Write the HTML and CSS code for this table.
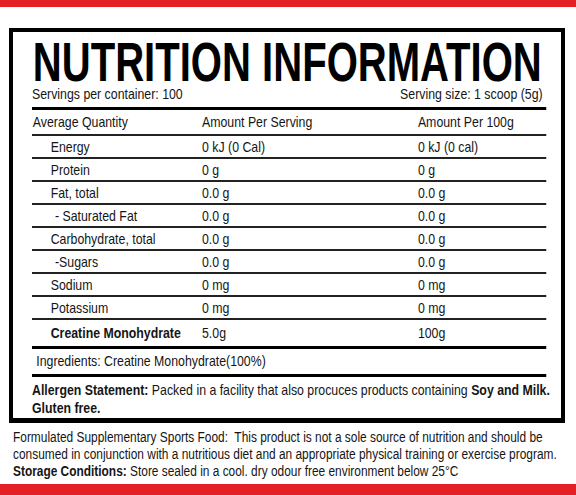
FILE: index.html
```html
<!DOCTYPE html>
<html lang="en">
<head>
<meta charset="utf-8">
<title>Nutrition Information</title>
<link rel="stylesheet" href="styles.css">
</head>
<body>
<div class="page">
  <div class="red-bar top"></div>
  <section class="panel">
    <div class="condensed panel-inner">
      <h1 class="title"><span class="title-text">NUTRITION INFORMATION</span></h1>
      <div class="servings">
        <span>Servings per container: 100</span>
        <span>Serving size: 1 scoop (5g)</span>
      </div>
      <div class="facts">
        <div class="row head">
          <div class="c1">Average Quantity</div>
          <div class="c2">Amount Per Serving</div>
          <div class="c3">Amount Per 100g</div>
        </div>
        <div class="row">
          <div class="c1 ind">Energy</div>
          <div class="c2">0 kJ (0 Cal)</div>
          <div class="c3">0 kJ (0 cal)</div>
        </div>
        <div class="row">
          <div class="c1 ind">Protein</div>
          <div class="c2">0 g</div>
          <div class="c3">0 g</div>
        </div>
        <div class="row">
          <div class="c1 ind">Fat, total</div>
          <div class="c2">0.0 g</div>
          <div class="c3">0.0 g</div>
        </div>
        <div class="row">
          <div class="c1 sub">- Saturated Fat</div>
          <div class="c2">0.0 g</div>
          <div class="c3">0.0 g</div>
        </div>
        <div class="row">
          <div class="c1 ind">Carbohydrate, total</div>
          <div class="c2">0.0 g</div>
          <div class="c3">0.0 g</div>
        </div>
        <div class="row">
          <div class="c1 sub">-Sugars</div>
          <div class="c2">0.0 g</div>
          <div class="c3">0.0 g</div>
        </div>
        <div class="row">
          <div class="c1 ind">Sodium</div>
          <div class="c2">0 mg</div>
          <div class="c3">0 mg</div>
        </div>
        <div class="row">
          <div class="c1 ind">Potassium</div>
          <div class="c2">0 mg</div>
          <div class="c3">0 mg</div>
        </div>
        <div class="row last">
          <div class="c1 ind strong">Creatine Monohydrate</div>
          <div class="c2">5.0g</div>
          <div class="c3">100g</div>
        </div>
      </div>
      <div class="ingredients">Ingredients: Creatine Monohydrate(100%)</div>
      <p class="allergen"><b>Allergen Statement:</b> Packed in a facility that also procuces products containing <b>Soy and Milk.</b><br><b>Gluten free.</b></p>
    </div>
  </section>
  <footer class="notes">
    <div class="condensed notes-inner">
      <p>Formulated Supplementary Sports Food:&nbsp; This product is not a sole source of nutrition and should be<br>consumed in conjunction with a nutritious diet and an appropriate physical training or exercise program.</p>
      <p><b>Storage Conditions:</b> Store sealed in a cool. dry odour free environment below 25°C</p>
    </div>
  </footer>
  <div class="red-bar bottom"></div>
</div>
</body>
</html>
```
FILE: styles.css
```css
html, body {
  margin: 0;
  padding: 0;
  background: #ffffff;
}

body {
  font-family: "Liberation Sans", Arial, sans-serif;
  font-size: 14.5px;
  color: #151515;
}

.page {
  display: flex;
  flex-direction: column;
  height: 495px;
  overflow: hidden;
}

.red-bar {
  background: #e41f26;
  flex: none;
}

.red-bar.top {
  height: 7px;
}

.red-bar.bottom {
  height: 11px;
  margin-top: auto;
}

/* The label uses a condensed typeface; no condensed face is installed,
   so the text blocks are set wide and squeezed horizontally. */
.condensed {
  width: calc(100% / 0.85);
  transform: scaleX(0.85);
  transform-origin: 0 0;
  white-space: nowrap;
}

.panel {
  margin: 21px 11px 0 9px;
  border: 4px solid #000;
  border-bottom-width: 5px;
  padding: 0 15px 1px 19px;
}

.title {
  margin: 0;
  padding-top: 5px;
  height: 50px;
  font-weight: bold;
  font-size: 55px;
  line-height: 50px;
  color: #000;
}

.title-text {
  display: inline-block;
  transform: scaleX(0.857);
  transform-origin: 0 50%;
  margin-left: 1px;
}

.servings {
  display: flex;
  justify-content: space-between;
  line-height: 14px;
  padding-right: 4px;
  margin-bottom: 6px;
}

.facts {
  border-top: 3px solid #000;
}

.row {
  display: grid;
  grid-template-columns: 200px 254px 1fr;
  align-items: center;
  height: 21px;
  border-bottom: 2px solid #222;
}

.row.head {
  height: 24px;
}

.row.last {
  height: 26px;
  border-bottom: 3px solid #000;
}

.c1 {
  padding-left: 1px;
}

.c1.ind {
  padding-left: 22px;
}

.c1.sub {
  padding-left: 27px;
}

.strong {
  font-weight: bold;
}

.ingredients {
  height: 25px;
  line-height: 25px;
  padding-left: 5px;
  border-bottom: 3px solid #000;
}

.allergen {
  margin: 0;
  padding-top: 4px;
  line-height: 18px;
}

.notes {
  padding: 6px 0 0 13px;
  font-size: 14px;
  line-height: 17px;
}

.notes-inner {
  width: calc(550px / 0.85);
}

.notes p {
  margin: 0;
}
```
